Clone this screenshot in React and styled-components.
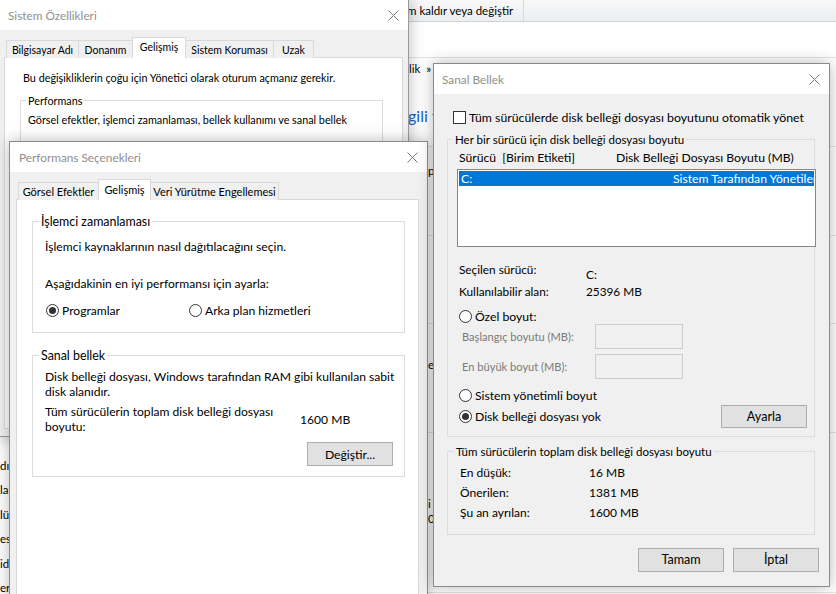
import React from "react";
import styled, { createGlobalStyle } from "styled-components";

const FONT = `Lato, "Noto Sans", sans-serif`;

const GlobalStyle = createGlobalStyle`
  html, body { margin: 0; padding: 0; }
  body { background: #fff; font-family: ${FONT}; font-size: 11.5px; color: #000; }
  * { box-sizing: border-box; }
`;

const Desktop = styled.div`
  position: relative;
  width: 836px;
  height: 594px;
  overflow: hidden;
  background: #fff;
`;

/* ---------- background control panel ---------- */

const BackApp = styled.div`
  display: flex;
  flex-direction: column;
  width: 100%;
  height: 100%;
`;

const CommandBar = styled.div`
  height: 22px;
  flex-shrink: 0;
  display: flex;
  padding-left: 407px;
  background: linear-gradient(#f8f8f8, #eceef1);
  border-bottom: 1px solid #cfd3d8;
`;

const CommandItem = styled.div`
  width: 117px;
  display: flex;
  align-items: center;
  white-space: nowrap;
  border-right: 1px solid #d8dadd;
`;

const AddressArea = styled.div`
  height: 36px;
  flex-shrink: 0;
  border-bottom: 1px solid #e3e3e3;
`;

const Crumbs = styled.div`
  height: 20px;
  flex-shrink: 0;
  display: flex;
  align-items: center;
  gap: 6px;
  padding-left: 409px;
`;

const Content = styled.div`
  flex: 1;
  display: flex;
`;

const Nav = styled.div`
  width: 408px;
  padding-top: 380px;
`;

const NavItem = styled.div`
  height: 24.4px;
  line-height: 15px;
  white-space: nowrap;
`;

const Main = styled.div`
  flex: 1;
  display: flex;
  flex-direction: column;
`;

const Heading = styled.div`
  height: 69px;
  padding-top: 28px;
  font-size: 16px;
  color: #1a5fc8;
  border-bottom: 1px solid #e3e3e3;
`;

const Section = styled.div`
  height: ${(p) => p.$h}px;
  padding: ${(p) => p.$pt}px 0 0 20px;
  line-height: 15px;
  border-bottom: 1px solid #e3e3e3;
`;

/* ---------- dialog windows ---------- */

const Window = styled.div`
  position: absolute;
  left: ${(p) => p.$x}px;
  top: ${(p) => p.$y}px;
  width: ${(p) => p.$w}px;
  height: ${(p) => p.$h}px;
  display: flex;
  flex-direction: column;
  font-size: ${(p) => p.$fs}px;
  background: #f0f0f0;
  border: 1px solid ${(p) => p.$border || "#9a9a9a"};
  box-shadow: 0 0 14px rgba(0, 0, 0, 0.28);
`;

const TitleBar = styled.div`
  height: 30px;
  flex-shrink: 0;
  display: flex;
  align-items: center;
  justify-content: space-between;
  padding-left: ${(p) => p.$pl || 8}px;
  background: #fff;
`;

const Title = styled.span`
  font-size: 11.8px;
  color: #8f8f8f;
`;

const CloseBox = styled.div`
  width: 30px;
  height: 30px;
  display: flex;
  align-items: center;
  justify-content: center;
`;

const CloseX = () => (
  <CloseBox>
    <svg width="11" height="11" viewBox="0 0 11 11">
      <path d="M0.5 0.5L10.5 10.5M10.5 0.5L0.5 10.5" stroke="#7a7a7a" strokeWidth="1" fill="none" />
    </svg>
  </CloseBox>
);

const DialogBody = styled.div`
  flex: 1;
  display: flex;
  flex-direction: column;
  padding: ${(p) => p.$pad};
`;

const TabStrip = styled.div`
  display: flex;
  align-items: flex-end;
  height: 21px;
  margin-top: ${(p) => p.$mt}px;
  margin-bottom: -1px;
  padding-left: 3px;
  font-size: ${(p) => p.$fs}px;
  position: relative;
  z-index: 1;
`;

const Tab = styled.div`
  width: ${(p) => p.$w}px;
  height: ${(p) => (p.$active ? 21 : 18)}px;
  margin-left: -1px;
  display: flex;
  align-items: center;
  justify-content: center;
  padding-bottom: ${(p) => (p.$active ? 2 : 0)}px;
  white-space: nowrap;
  background: ${(p) => (p.$active ? "#fff" : "#f0f0f0")};
  border: 1px solid #d9d9d9;
  border-bottom: none;
`;

const TabPanel = styled.div`
  flex: 1;
  background: #fff;
  border: 1px solid #d9d9d9;
  padding: ${(p) => p.$pad};
  overflow: hidden;
`;

const Text = styled.div`
  line-height: 15px;
  margin-top: ${(p) => p.$mt || 0}px;
  white-space: nowrap;
`;

const Group = styled.fieldset`
  width: ${(p) => p.$w}px;
  min-width: 0;
  margin: ${(p) => p.$mt || 0}px 0 0 ${(p) => p.$ml || 0}px;
  padding: 0 ${(p) => p.$pr || 0}px ${(p) => p.$pb || 0}px ${(p) => p.$pl || 12}px;
  min-height: ${(p) => p.$minh || 0}px;
  border: 1px solid #dcdcdc;
`;

const Legend = styled.legend`
  margin-left: ${(p) => p.$ml ?? -6}px;
  padding: 0 2px;
  line-height: 15px;
  font-size: ${(p) => (p.$fs ? `${p.$fs}px` : "inherit")};
  white-space: nowrap;
`;

const RadioRow = styled.div`
  display: flex;
  align-items: center;
  margin-top: ${(p) => p.$mt || 0}px;
  margin-left: ${(p) => p.$ml || 0}px;
`;

const RadioItem = styled.label`
  display: inline-flex;
  align-items: center;
  gap: 3px;
  width: ${(p) => (p.$w ? `${p.$w}px` : "auto")};
  line-height: 15px;
  white-space: nowrap;
`;

const RadioDot = styled.span`
  position: relative;
  width: 13px;
  height: 13px;
  flex-shrink: 0;
  border-radius: 50%;
  border: 1px solid #333;
  background: #fff;

  &::after {
    content: "";
    position: absolute;
    inset: 2px;
    border-radius: 50%;
    background: #333;
    display: ${(p) => (p.$on ? "block" : "none")};
  }
`;

const Radio = ({ on, w, children }) => (
  <RadioItem $w={w}>
    <RadioDot $on={on} />
    {children}
  </RadioItem>
);

const Button = styled.button`
  width: ${(p) => p.$w || 86}px;
  height: ${(p) => p.$h || 24}px;
  padding: 0;
  font-family: inherit;
  font-size: ${(p) => p.$fs || 12.2}px;
  color: #000;
  background: #e1e1e1;
  border: 1px solid #adadad;
`;

const ButtonRow = styled.div`
  display: flex;
  justify-content: flex-end;
  gap: 9px;
  margin-top: ${(p) => p.$mt || 0}px;
  margin-right: ${(p) => p.$mr || 0}px;
`;

const TotalRow = styled.div`
  display: flex;
  align-items: center;
  margin-top: 5px;
`;

const TotalLabel = styled.div`
  width: 255px;
  line-height: 15px;
`;

/* Sanal Bellek parts */

const CheckRow = styled.label`
  display: flex;
  align-items: center;
  gap: 3px;
  height: 15px;
  margin-left: 6px;
  font-size: 12.3px;
  white-space: nowrap;
`;

const CheckBox = styled.span`
  width: 13px;
  height: 13px;
  border: 1px solid #333;
  background: #fff;
`;

const ListHeader = styled.div`
  display: flex;
  margin-top: 3px;
  line-height: 15px;
  white-space: pre;
`;

const HeaderCol = styled.span`
  width: ${(p) => (p.$w ? `${p.$w}px` : "auto")};
`;

const ListBox = styled.div`
  width: 359px;
  height: 78px;
  margin: 4px 0 0 -2px;
  padding: 1px;
  background: #fff;
  border: 1px solid #828790;
`;

const ListRow = styled.div`
  display: flex;
  height: 15px;
  line-height: 15px;
  overflow: hidden;
  white-space: nowrap;
  color: #fff;
  background: ${(p) => (p.$selected ? "#0078d7" : "transparent")};
`;

const ListCell = styled.span`
  flex-shrink: 0;
  width: ${(p) => (p.$w ? `${p.$w}px` : "auto")};
  padding-left: ${(p) => p.$pl || 0}px;
`;

const InfoGrid = styled.div`
  display: grid;
  grid-template-columns: ${(p) => p.$col}px auto;
  row-gap: ${(p) => p.$gap}px;
  margin-top: ${(p) => p.$mt}px;
  font-size: ${(p) => p.$fs}px;
  line-height: 15px;
`;

const InfoValue = styled.span`
  padding-top: ${(p) => p.$drop || 0}px;
`;

const SizeRow = styled.div`
  display: flex;
  align-items: center;
  margin-top: ${(p) => p.$mt || 0}px;
`;

const SizeLabel = styled.span`
  width: 136px;
  padding-left: 3px;
  font-size: 11.1px;
  color: #7a7a7a;
  white-space: nowrap;
`;

const SizeInput = styled.div`
  width: 88px;
  height: 25px;
  background: #f0f0f0;
  border: 1px solid #cccccc;
`;

const ActionRow = styled.div`
  display: flex;
  align-items: center;
  justify-content: space-between;
  margin-top: 1.5px;
  padding-right: 7px;
`;

export default function App() {
  return (
    <>
      <GlobalStyle />
      <Desktop>
        <BackApp>
          <CommandBar>
            <CommandItem>m kaldır veya değiştir</CommandItem>
          </CommandBar>
          <AddressArea />
          <Crumbs>
            <span>lik</span>
            <span>»</span>
          </Crumbs>
          <Content>
            <Nav>
              {["dı", "las", "lü", "es", "id", "ere"].map((t) => (
                <NavItem key={t}>{t}</NavItem>
              ))}
            </Nav>
            <Main>
              <Heading>gili t</Heading>
              <Section $h={89} $pt={16}>p</Section>
              <Section $h={88} $pt={0} />
              <Section $h={109} $pt={33}>e</Section>
              <Section $h={160} $pt={63}>
                i
                <br />0
              </Section>
            </Main>
          </Content>
        </BackApp>

        {/* Sistem Özellikleri */}
        <Window $x={-1} $y={-1} $w={410} $h={438} $fs={10.8}>
          <TitleBar $pl={8}>
            <Title>Sistem Özellikleri</Title>
            <CloseX />
          </TitleBar>
          <DialogBody $pad="0 5px 7px 4px">
            <TabStrip $mt={7} $fs={10.5}>
              <Tab $w={73}>Bilgisayar Adı</Tab>
              <Tab $w={55}>Donanım</Tab>
              <Tab $w={54} $active>Gelişmiş</Tab>
              <Tab $w={89}>Sistem Koruması</Tab>
              <Tab $w={41}>Uzak</Tab>
            </TabStrip>
            <TabPanel $pad="12px 0 0 18px">
              <Text>Bu değişikliklerin çoğu için Yönetici olarak oturum açmanız gerekir.</Text>
              <Group $w={363} $ml={-3} $mt={8} $pl={7} $minh={120}>
                <Legend $ml={-2}>Performans</Legend>
                <Text $mt={4}>Görsel efektler, işlemci zamanlaması, bellek kullanımı ve sanal bellek</Text>
              </Group>
            </TabPanel>
          </DialogBody>
        </Window>

        {/* Performans Seçenekleri */}
        <Window $x={9} $y={141} $w={419} $h={470} $fs={12.1} $border="#8c8c8c">
          <TitleBar $pl={9}>
            <Title>Performans Seçenekleri</Title>
            <CloseX />
          </TitleBar>
          <DialogBody $pad="0 8px 0 6px">
            <TabStrip $mt={7} $fs={11}>
              <Tab $w={81}>Görsel Efektler</Tab>
              <Tab $w={53} $active>Gelişmiş</Tab>
              <Tab $w={129}>Veri Yürütme Engellemesi</Tab>
            </TabStrip>
            <TabPanel $pad="14px 0 0 15px">
              <Group $w={373} $pb={14}>
                <Legend $fs={12.4}>İşlemci zamanlaması</Legend>
                <Text $mt={10}>İşlemci kaynaklarının nasıl dağıtılacağını seçin.</Text>
                <Text $mt={22}>Aşağıdakinin en iyi performansı için ayarla:</Text>
                <RadioRow $mt={12} $ml={1}>
                  <Radio on w={143}>Programlar</Radio>
                  <Radio>Arka plan hizmetleri</Radio>
                </RadioRow>
              </Group>
              <Group $w={373} $mt={15} $pb={10} $pr={11}>
                <Legend $fs={12.4}>Sanal bellek</Legend>
                <Text $mt={6}>Disk belleği dosyası, Windows tarafından RAM gibi kullanılan sabit</Text>
                <Text>disk alanıdır.</Text>
                <TotalRow>
                  <TotalLabel>
                    Tüm sürücülerin toplam disk belleği dosyası
                    <br />
                    boyutu:
                  </TotalLabel>
                  <span>1600 MB</span>
                </TotalRow>
                <ButtonRow $mt={8}>
                  <Button>Değiştir...</Button>
                </ButtonRow>
              </Group>
            </TabPanel>
          </DialogBody>
        </Window>

        {/* Sanal Bellek */}
        <Window $x={433} $y={63} $w={397} $h={524} $fs={12.2} $border="#8a8a8a">
          <TitleBar $pl={8}>
            <Title>Sanal Bellek</Title>
            <CloseX />
          </TitleBar>
          <DialogBody $pad="16px 14px 0 13px">
            <CheckRow>
              <CheckBox />
              Tüm sürücülerde disk belleği dosyası boyutunu otomatik yönet
            </CheckRow>
            <Group $w={368} $mt={7} $pl={11} $pb={8}>
              <Legend $fs={11.5}>Her bir sürücü için disk belleği dosyası boyutu</Legend>
              <ListHeader>
                <HeaderCol $w={157}>Sürücü  [Birim Etiketi]</HeaderCol>
                <HeaderCol>Disk Belleği Dosyası Boyutu (MB)</HeaderCol>
              </ListHeader>
              <ListBox>
                <ListRow $selected>
                  <ListCell $w={214} $pl={2}>C:</ListCell>
                  <ListCell>Sistem Tarafından Yönetilen</ListCell>
                </ListRow>
              </ListBox>
              <InfoGrid $col={127} $gap={2} $mt={14.5} $fs={11.8}>
                <span>Seçilen sürücü:</span>
                <InfoValue $drop={5}>C:</InfoValue>
                <span>Kullanılabilir alan:</span>
                <InfoValue>25396 MB</InfoValue>
              </InfoGrid>
              <RadioRow $mt={10}>
                <Radio>Özel boyut:</Radio>
              </RadioRow>
              <SizeRow>
                <SizeLabel>Başlangıç boyutu (MB):</SizeLabel>
                <SizeInput />
              </SizeRow>
              <SizeRow $mt={5}>
                <SizeLabel>En büyük boyut (MB):</SizeLabel>
                <SizeInput />
              </SizeRow>
              <RadioRow $mt={9.5}>
                <Radio>Sistem yönetimli boyut</Radio>
              </RadioRow>
              <ActionRow>
                <Radio on>Disk belleği dosyası yok</Radio>
                <Button $h={23} $fs={12.6}>Ayarla</Button>
              </ActionRow>
            </Group>
            <Group $w={368} $mt={7} $pb={14}>
              <Legend $fs={11.5}>Tüm sürücülerin toplam disk belleği dosyası boyutu</Legend>
              <InfoGrid $col={129} $gap={5} $mt={6} $fs={12}>
                <span>En düşük:</span>
                <span>16 MB</span>
                <span>Önerilen:</span>
                <span>1381 MB</span>
                <span>Şu an ayrılan:</span>
                <span>1600 MB</span>
              </InfoGrid>
            </Group>
            <ButtonRow $mt={13} $mr={-4}>
              <Button $fs={12.6}>Tamam</Button>
              <Button $fs={12.6}>İptal</Button>
            </ButtonRow>
          </DialogBody>
        </Window>
      </Desktop>
    </>
  );
}
